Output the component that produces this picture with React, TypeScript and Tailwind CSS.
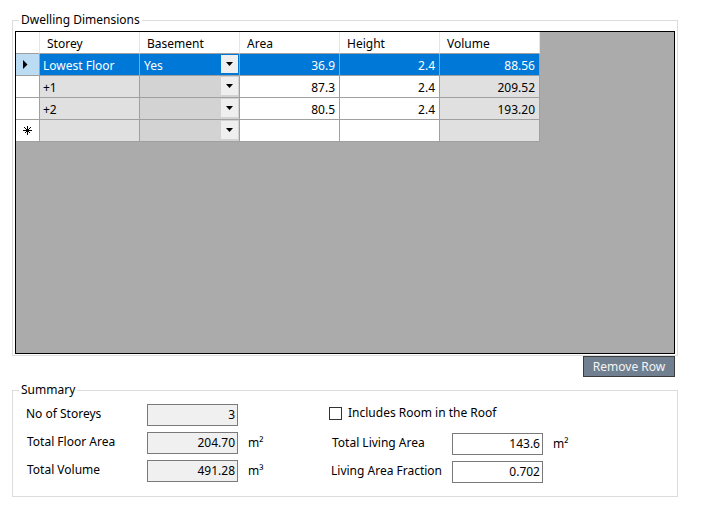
import React from 'react';

type StoreyRow = {
  storey: string;
  basement: string;
  area: string;
  height: string;
  volume: string;
  selected?: boolean;
  isNew?: boolean;
};

const rows: StoreyRow[] = [
  { storey: 'Lowest Floor', basement: 'Yes', area: '36.9', height: '2.4', volume: '88.56', selected: true },
  { storey: '+1', basement: '', area: '87.3', height: '2.4', volume: '209.52' },
  { storey: '+2', basement: '', area: '80.5', height: '2.4', volume: '193.20' },
  { storey: '', basement: '', area: '', height: '', volume: '', isNew: true },
];

const columns = ['Storey', 'Basement', 'Area', 'Height', 'Volume'];

const RowArrow = () => (
  <svg width="5" height="9" viewBox="0 0 5 9">
    <path d="M0 0 L4.5 4.5 L0 9 Z" fill="#000" />
  </svg>
);

const NewRowStar = () => (
  <svg width="9" height="9" viewBox="0 0 9 9" stroke="#000" strokeWidth="1" shapeRendering="crispEdges">
    <line x1="4.5" y1="0" x2="4.5" y2="9" />
    <line x1="0" y1="4.5" x2="9" y2="4.5" />
    <line x1="1.5" y1="1.5" x2="7.5" y2="7.5" />
    <line x1="7.5" y1="1.5" x2="1.5" y2="7.5" />
  </svg>
);

const DropButton = () => (
  <div className="absolute right-[1px] top-[1px] flex h-[18px] w-[17px] items-center justify-center bg-[#efefef]">
    <svg width="7" height="4" viewBox="0 0 7 4">
      <path d="M0 0 H7 L3.5 4 Z" fill="#000" />
    </svg>
  </div>
);

const cell = 'h-[22px] w-[100px] border-r border-b border-[#a0a0a0] flex items-center pt-[2px]';

const GridRow = ({ row }: { row: StoreyRow }) => {
  const sel = row.selected;
  return (
    <div className={`flex ${sel ? 'text-white' : 'text-black'}`}>
      <div
        className={`flex h-[22px] w-[24px] items-center border-r border-b border-[#a0a0a0] pl-[7px] ${
          sel ? 'bg-[#bcdcf4]' : 'bg-white'
        }`}
      >
        {sel && <RowArrow />}
        {row.isNew && <NewRowStar />}
      </div>
      <div className={`${cell} pl-[3px] ${sel ? 'bg-[#0078d7]' : 'bg-[#e0e0e0]'}`}>{row.storey}</div>
      <div className={`${cell} relative pl-[4px] ${sel ? 'bg-[#0078d7]' : 'bg-[#d3d3d3]'}`}>
        {row.basement}
        <DropButton />
      </div>
      <div className={`${cell} justify-end pr-[4px] ${sel ? 'bg-[#0078d7]' : 'bg-white'}`}>{row.area}</div>
      <div className={`${cell} justify-end pr-[4px] ${sel ? 'bg-[#0078d7]' : 'bg-white'}`}>{row.height}</div>
      <div className={`${cell} justify-end pr-[4px] ${sel ? 'bg-[#0078d7]' : 'bg-[#e0e0e0]'}`}>{row.volume}</div>
    </div>
  );
};

const ValueBox = ({ value, readOnly }: { value: string; readOnly?: boolean }) => (
  <div
    className={`flex h-[22px] w-[91px] items-center justify-end border border-[#7a7a7a] pr-[2px] ${
      readOnly ? 'bg-[#f0f0f0]' : 'bg-white'
    }`}
  >
    {value}
  </div>
);

const SummaryField = ({
  label,
  value,
  unit,
  readOnly,
  labelWidth,
}: {
  label: string;
  value: string;
  unit?: string;
  readOnly?: boolean;
  labelWidth: string;
}) => (
  <div className="flex h-[22px] items-center">
    <div className={`${labelWidth} pb-[3px]`}>{label}</div>
    <ValueBox value={value} readOnly={readOnly} />
    {unit && <div className="ml-[10px]">{unit}</div>}
  </div>
);

export default function App() {
  return (
    <div
      className="h-[519px] w-[701px] overflow-hidden bg-white text-[12px] leading-[14px] text-black"
      style={{ fontFamily: '"Noto Sans", "DejaVu Sans", sans-serif' }}
    >
      {/* dwelling dimensions group */}
      <fieldset className="ml-[12px] mt-[13px] w-[666px] border border-[#dcdcdc] p-0">
        <legend className="ml-[6px] px-[2px] leading-[14px]">Dwelling Dimensions</legend>
        <div className="px-[2px] pb-[1px] pt-[4px]">
          <div className="h-[323px] border border-black bg-[#ababab]">
            <div className="flex">
              <div className="h-[22px] w-[24px] border-r border-b border-r-[#e5e5e5] border-b-[#a0a0a0] bg-white" />
              {columns.map((c) => (
                <div
                  key={c}
                  className="flex h-[22px] w-[100px] items-center border-r border-b border-r-[#e5e5e5] border-b-[#a0a0a0] bg-white pl-[7px] pt-[2px]"
                >
                  {c}
                </div>
              ))}
            </div>
            {rows.map((r, i) => (
              <GridRow key={i} row={r} />
            ))}
          </div>
        </div>
      </fieldset>

      <div className="ml-[12px] flex w-[666px] justify-end pr-[3px]">
        <button className="h-[21px] w-[92px] border border-[#3c3c3c] bg-[#708090] text-[12px] text-[#f4f4f4]">
          Remove Row
        </button>
      </div>

      {/* summary group */}
      <fieldset className="ml-[12px] mt-[6px] w-[666px] border border-[#dcdcdc] p-0">
        <legend className="ml-[6px] px-[2px] leading-[14px]">Summary</legend>
        <div className="flex pb-[13px] pl-[13px] pt-[7px]">
          <div className="flex w-[303px] flex-col gap-[6px]">
            <SummaryField label="No of Storeys" value="3" readOnly labelWidth="w-[121px]" />
            <SummaryField label="Total Floor Area" value="204.70" unit="m²" readOnly labelWidth="w-[121px] pl-[1px]" />
            <SummaryField label="Total Volume" value="491.28" unit="m³" readOnly labelWidth="w-[121px] pl-[1px]" />
          </div>
          <div className="flex flex-col">
            <label className="flex h-[18px] items-center">
              <span className="h-[13px] w-[13px] border border-[#333] bg-white" />
              <span className="ml-[6px]">Includes Room in the Roof</span>
            </label>
            <div className="mt-[11px] flex flex-col gap-[6px]">
              <SummaryField label="Total Living Area" value="143.6" unit="m²" labelWidth="w-[123px] pl-[3px]" />
              <SummaryField label="Living Area Fraction" value="0.702" labelWidth="w-[123px] pl-[2px]" />
            </div>
          </div>
        </div>
      </fieldset>
    </div>
  );
}
